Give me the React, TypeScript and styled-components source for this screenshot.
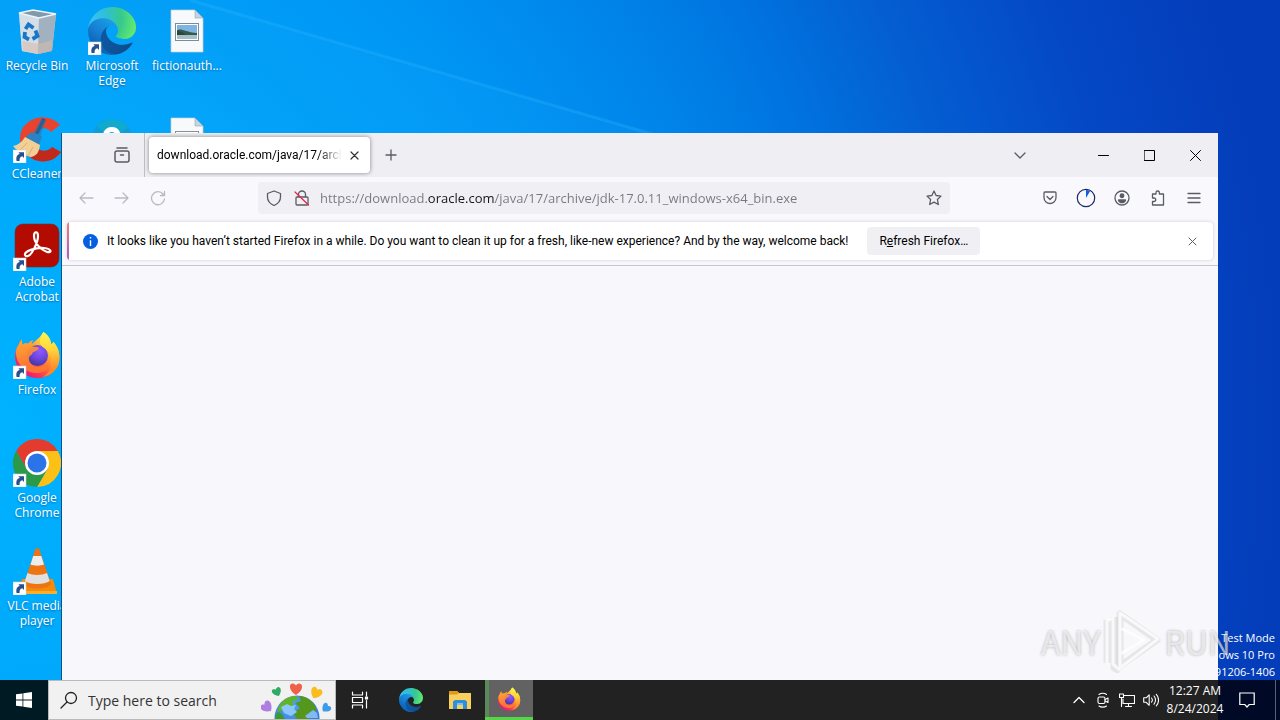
import React from "react";
import styled, { createGlobalStyle } from "styled-components";

const GlobalStyle = createGlobalStyle`
  *, *::before, *::after { box-sizing: border-box; }
  body { margin: 0; font-family: "Open Sans", "Noto Sans", sans-serif; font-size: 12px; }
  button, input { font: inherit; color: inherit; border: 0; padding: 0; background: none; }
  svg { display: block; flex: none; }
`;

/* ---------- Desktop ---------- */

const Screen = styled.div`
  display: flex;
  flex-direction: column;
  min-height: 100vh;
  overflow: hidden;
`;

const Desktop = styled.main`
  position: relative;
  flex: 1;
  min-height: 680px;
  overflow: hidden;
  background: radial-gradient(ellipse 100% 190% at 0% 62%, #00b2ff 0%, #00a8fb 22%, #0098f5 42%, #0084ea 57%, #0074e0 66%, #045ed2 76%, #0448c6 88%, #043dba 100%);
`;

const Wallpaper = styled.svg`
  position: absolute;
  inset: 0;
  width: 100%;
  height: 100%;
`;

const ShortcutColumns = styled.div`
  position: relative;
  display: flex;
`;

const ShortcutColumn = styled.div`
  display: flex;
  flex-direction: column;
  width: 75px;
`;

const Shortcut = styled.button`
  display: flex;
  flex-direction: column;
  align-items: center;
  gap: 3px;
  width: 74px;
  height: 108px;
  padding-top: 7px;
  color: #fff;
  font-size: 12px;
  line-height: 15px;
  text-align: center;
  text-shadow: 0 1px 2px rgba(0, 30, 80, 0.45);
`;

const BuildInfo = styled.p`
  position: absolute;
  right: 5px;
  bottom: 0;
  margin: 0;
  color: #fff;
  font-size: 11px;
  line-height: 17px;
  text-align: right;
  white-space: pre;
`;

/* ---------- Browser window ---------- */

const BrowserWindow = styled.section`
  position: absolute;
  inset: 133px 62px 0 61px;
  display: flex;
  flex-direction: column;
  border-left: 1px solid #12508a;
  background: #f8f8fc;
  color: #15141a;
`;

const TabStrip = styled.header`
  display: flex;
  align-items: center;
  height: 44px;
  background: #efeef3;
`;

const FirefoxView = styled.div`
  display: flex;
  justify-content: flex-end;
  align-self: stretch;
  align-items: center;
  width: 83px;
  padding-right: 4px;
  border-right: 1px solid #bdbdc4;
`;

const IconButton = styled.button<{ $width?: number; $color?: string }>`
  display: flex;
  align-items: center;
  justify-content: center;
  width: ${(p) => p.$width ?? 36}px;
  height: 32px;
  color: ${(p) => p.$color ?? "#5b5b66"};
`;

const Tab = styled.div`
  display: flex;
  align-items: center;
  width: 221px;
  height: 36px;
  margin-left: 4px;
  padding: 0 4px 0 8px;
  border-radius: 4px;
  background: #fff;
  box-shadow: 0 0 4px rgba(0, 0, 0, 0.45);
`;

const TabTitle = styled.span`
  flex: 1;
  overflow: hidden;
  font-family: Roboto, sans-serif;
  font-size: 12px;
  color: #000;
  white-space: nowrap;
  mask-image: linear-gradient(to left, transparent, #000 24px);
`;

const Spacer = styled.div<{ $width?: number }>`
  flex: ${(p) => (p.$width ? `0 0 ${p.$width}px` : "1")};
`;

const Toolbar = styled.nav`
  display: flex;
  align-items: center;
  height: 41px;
  padding: 0 6px;
  background: #f9f9fd;
`;

const AddressBar = styled.div`
  display: flex;
  flex: 1;
  align-items: center;
  height: 32px;
  padding-left: 2px;
  border-radius: 4px;
  background: #f0f0f4;
`;

/* The host name is emphasised by painting the glyphs with a stepped fill. */
const AddressInput = styled.input`
  flex: 1;
  min-width: 0;
  height: 28px;
  padding-left: 4px;
  font-size: 13px;
  outline: none;
  color: transparent;
  background: linear-gradient(to right, #77777f 112px, #15141a 112px, #15141a 179px, #77777f 179px);
  background-clip: text;
`;

const Notice = styled.div`
  display: flex;
  align-items: center;
  height: 38px;
  margin: 4px 5px 5px;
  border-radius: 4px;
  background: linear-gradient(#f08070, #a45cc8) left / 2px 100% no-repeat #fff;
  box-shadow: 0 0 3px rgba(58, 57, 68, 0.25);
  padding: 0 3px 0 16px;
  font-family: Roboto, sans-serif;
  font-size: 12px;
  color: #000;
`;

const NoticeText = styled.span`
  margin: 0 19px 0 9px;
  white-space: nowrap;
`;

const RefreshButton = styled.button`
  height: 28px;
  padding: 0 12px;
  border-radius: 4px;
  background: #f0f0f4;
  white-space: nowrap;
`;

const Page = styled.div`
  flex: 1;
  border-top: 1px solid #c6c6cb;
  background: #f8f8fc;
`;

/* ---------- Recorder watermark ---------- */

const Watermark = styled.div`
  position: absolute;
  right: 49px;
  bottom: 7px;
  display: flex;
  align-items: center;
  gap: 3px;
  color: rgba(255, 255, 255, 0.6);
  font-family: "Noto Sans CJK JP", sans-serif;
  font-size: 32px;
  line-height: 64px;
  text-shadow: 0 0 3px rgba(0, 0, 0, 0.3);
  pointer-events: none;
`;

/* ---------- Taskbar ---------- */

const Taskbar = styled.footer`
  display: flex;
  height: 40px;
  color: #fff;
  background: linear-gradient(to right, #001a24 62px, #222 62px, #222 calc(100% - 62px), #000a26 calc(100% - 62px));
`;

const TaskButton = styled.button<{ $active?: boolean }>`
  display: flex;
  align-items: center;
  justify-content: center;
  width: 48px;
  height: 40px;
  margin-right: 1px;
  background: ${(p) => (p.$active ? "linear-gradient(to right, #5a8a5a 4px, #626262 4px)" : "none")};
  border-bottom: ${(p) => (p.$active ? "3px solid #55d646" : "0")};
`;

const StartButton = styled(TaskButton)`
  margin: 0;
`;

const SearchBox = styled.label`
  display: flex;
  align-items: center;
  width: 288px;
  border: 1px solid #b9b9b9;
  background: #f1f1f1;
  color: #222;
  padding: 0 2px 0 11px;
`;

const SearchInput = styled.input`
  flex: 1;
  min-width: 0;
  margin-left: 10px;
  font-size: 14px;
  outline: none;
  &::placeholder { color: #333; opacity: 1; }
`;

const Tray = styled.div`
  display: flex;
  align-items: center;
  margin-left: auto;
`;

const TrayButton = styled.button<{ $width?: number }>`
  display: flex;
  align-items: center;
  justify-content: center;
  width: ${(p) => p.$width ?? 24}px;
  height: 40px;
`;

const Clock = styled.button`
  display: flex;
  flex-direction: column;
  align-items: center;
  width: 64px;
  font-size: 12px;
  line-height: 18px;
  white-space: nowrap;
`;

const ShowDesktop = styled.button`
  width: 5px;
  height: 40px;
  margin-left: 8px;
  border-left: 1px solid #56607a;
`;

/* ---------- Drawings ---------- */

const Arrow = () => (
  <g>
    <rect x="0" y="35" width="13" height="13" fill="#fff" stroke="#c8d4de" strokeWidth=".6" />
    <path d="M3.6 46c-.8-4 .5-6.4 3.2-6.9L5.4 37.3h5.6v5.6L9.3 41.2c-2.1.4-3 2-2.700 4.800z" fill="#27508f" />
  </g>
);

const EdgeShapes = ({ id }: { id: string }) => (
  <>
    <defs>
      <linearGradient id={id + "a"} x1="60" y1="180" x2="236" y2="190" gradientUnits="userSpaceOnUse">
        <stop stopColor="#0c59a4" /><stop offset="1" stopColor="#114a8b" />
      </linearGradient>
      <linearGradient id={id + "b"} x1="150" y1="90" x2="40" y2="230" gradientUnits="userSpaceOnUse">
        <stop stopColor="#1b9de2" /><stop offset=".5" stopColor="#1680d4" /><stop offset="1" stopColor="#0a5cae" />
      </linearGradient>
      <radialGradient id={id + "c"} cx="26" cy="60" r="235" gradientUnits="userSpaceOnUse">
        <stop stopColor="#35c1f1" /><stop offset=".3" stopColor="#2fbfd9" /><stop offset=".65" stopColor="#36c98d" /><stop offset="1" stopColor="#66eb6e" />
      </radialGradient>
    </defs>
    <path fill={`url(#${id}a)`} d="M231 190.500a93.700 93.700 0 0 1-10.500 4.700 101.900 101.900 0 0 1-35.900 6.500c-47.300 0-88.500-32.500-88.500-74.300a31.500 31.500 0 0 1 16.400-27.300c-42.800 1.800-53.800 46.400-53.800 72.500 0 73.900 68.100 81.400 82.800 81.400 7.900 0 19.800-2.300 27-4.600l1.300-.4a128.300 128.300 0 0 0 66.600-52.800 4 4 0 0 0-5.400-5.700z" />
    <path fill={`url(#${id}b)`} d="M105.700 241.400A79.200 79.200 0 0 1 83 220.100a80.700 80.700 0 0 1 29.500-120c3.200-1.500 8.500-4.100 15.600-4.100a32.400 32.400 0 0 1 25.700 13 31.900 31.900 0 0 1 6.300 18.700c0-.2 24.500-79.600-80-79.600-43.900 0-80 41.700-80 78.200a130.200 130.200 0 0 0 12.100 56 128 128 0 0 0 156.400 67.100 75.600 75.600 0 0 1-62.900-8z" />
    <path fill={`url(#${id}c)`} d="M152.300 148.900c-.8 1-3.300 2.500-3.300 5.600 0 2.600 1.700 5.100 4.700 7.200 14.400 10 41.500 8.700 41.600 8.700a59.600 59.600 0 0 0 30.300-8.300A61.400 61.400 0 0 0 256 109.200c.3-22.400-8-37.300-11.300-43.900C223.500 23.800 177.700 0 128 0A128 128 0 0 0 0 126.200c.5-36.500 36.800-66 80-66 3.500 0 23.500.3 42 10 16.300 8.600 24.900 18.900 30.900 29.200 6.200 10.700 7.300 24.200 7.300 29.500s-2.800 13.400-7.900 20z" />
  </>
);

const FirefoxShapes = ({ id }: { id: string }) => (
  <>
    <defs>
      <linearGradient id={id + "a"} x1="40" y1="8" x2="10" y2="44" gradientUnits="userSpaceOnUse">
        <stop stopColor="#fff44f" /><stop offset=".3" stopColor="#ffb52e" /><stop offset=".55" stopColor="#ff7139" /><stop offset=".8" stopColor="#f5315c" /><stop offset="1" stopColor="#e31587" />
      </linearGradient>
      <radialGradient id={id + "b"} cx="27" cy="20" r="14" gradientUnits="userSpaceOnUse">
        <stop stopColor="#9059ff" /><stop offset=".6" stopColor="#6b45dc" /><stop offset="1" stopColor="#4b3aa8" />
      </radialGradient>
      <linearGradient id={id + "c"} x1="32" y1="1" x2="38" y2="38" gradientUnits="userSpaceOnUse">
        <stop stopColor="#fff44f" /><stop offset=".5" stopColor="#ffd43a" /><stop offset="1" stopColor="#ff8a2c" />
      </linearGradient>
      <linearGradient id={id + "d"} x1="10" y1="12" x2="22" y2="32" gradientUnits="userSpaceOnUse">
        <stop stopColor="#ffa436" /><stop offset="1" stopColor="#ff7a2e" />
      </linearGradient>
    </defs>
    <path fill={`url(#${id}a)`} d="M9 8.500c-.3 2 .2 4 .8 5.200C11 12.500 13 12 15 12.500 16.500 11 18 10 20 9.300c-1 1.200-1.400 2.700-1.300 4C23 9 27 7 30.500 1c6 4.500 7 8.500 7.800 12.500l2.200-2.600c4 4.600 6.500 10 5.800 18C45 40 36 47 24.500 47 11.500 47 2 37 2 25.500c0-5.500 1.500-9 3.600-11.500.6-2.300 1.700-4 3.400-5.500z" />
    <circle cx="24.500" cy="24.500" r="10.500" fill={`url(#${id}b)`} />
    <path fill={`url(#${id}c)`} d="M30.500 1c6.300 4.300 7.300 8.500 7.800 12.500l2.200-2.600c4.500 5.500 7 12 5.300 20.100-2 8-8.300 13.500-15.800 15C37 42 39.500 35 38 28c-1-6-4-9-9-12.500C25.500 12.500 27 5.500 30.500 1z" />
    <path fill={`url(#${id}d)`} d="M9 8.500c-.3 2 .2 4 .8 5.200C11.600 12 14 12 15.600 13 17 11 18 10 20 9.300c-1.200 2-1.400 4-.6 6.200 3 .2 5.600.4 6.300 1.400.3 2-3.700 3.300-5.700 4.300-1 1.200-.7 2.300-1.400 2.600-2 .8-2.600 2.200-2.600 4 0 4.400 4 8.200 9 8.200 4 0 6-1.500 9-1.500 2 0 1.500 2 0 3.500-2.500 2.500-6 4-10.500 4C13 42 4 34 3 23c-.3-3.700.8-7 2.600-9C6.200 11.700 7.300 10 9 8.500z" opacity=".9" />
  </>
);

const RecycleBin = () => (
  <svg width="48" height="48" viewBox="0 0 48 48">
    <path d="M6 6l14-3 23 4-4 37-14 3-16-3z" fill="#b9c9d6" />
    <path d="M6 6l20 5-1 36-16-3z" fill="#d4dee6" />
    <path d="M26 11l17-4-4 37-14 3z" fill="#a2b1bf" />
    <path d="M6 6l14-3 23 4-17 4z" fill="#8199ad" stroke="#eef4f8" strokeWidth="1.300" />
    <path d="M9.500 34l16 3 14-4-.8 10.500L25 47l-15-3z" fill="#d9b9a8" opacity=".55" />
    <g fill="none" stroke="#1877c9" strokeWidth="3.800">
      <path d="M12.500 22l3-4.500 5 3.500" /><path d="M22.500 23.500l2 5.500-5 3" /><path d="M16 32.500l-4.500-2.500.5-5" />
    </g>
  </svg>
);

const EdgeIcon = () => (
  <svg width="48" height="48" viewBox="0 0 48 48"><svg width="48" height="48" viewBox="0 0 256 256"><EdgeShapes id="de" /></svg><Arrow /></svg>
);

const ImageFile = () => (
  <svg width="48" height="48" viewBox="0 0 48 48">
    <path d="M8 3h24l8 8v34H8z" fill="#f8f9fa" stroke="#c9cdd1" strokeWidth=".7" />
    <path d="M32 3l8 8h-8z" fill="#c3d5e2" stroke="#93a9b9" strokeWidth=".6" />
    <rect x="12.500" y="16.500" width="23" height="17" fill="#fff" stroke="#7a8b99" />
    <rect x="14" y="18" width="20" height="14" fill="#7fb3e2" />
    <path d="M14 23c5-2 8 2 20 3v2H14z" fill="#35594c" />
    <path d="M14 24c3 0 7 2 9 4h-9z" fill="#29483b" />
    <path d="M14 28h20v4H14z" fill="#a6bfc9" />
  </svg>
);

const TextFile = () => (
  <svg width="48" height="48" viewBox="0 0 48 48">
    <path d="M8 3h24l8 8v34H8z" fill="#f8f9fa" stroke="#c9cdd1" strokeWidth=".7" />
    <path d="M32 3l8 8h-8z" fill="#c3d5e2" stroke="#93a9b9" strokeWidth=".6" />
    <rect x="12.500" y="16.500" width="23" height="17" fill="#fff" stroke="#8a8f94" />
  </svg>
);

const CCleaner = () => (
  <svg width="48" height="48" viewBox="0 0 48 48">
    <path d="M47 10A23 22 0 0 0 11 11C8 15 7 19 7 24c0 8 4 15 11 19a22 22 0 0 0 30-6l-9-5c-4 5-11 5-15 1-5-5-4-14 1-18 5-3 10-2 13 2z" fill="#e8432f" />
    <path d="M48 37A22 22 0 0 1 18 43l5-11c4 5 12 5 16 0z" fill="#c02a1c" />
    <path d="M31 4l-9 18" stroke="#1a4470" strokeWidth="3.500" />
    <path d="M28 4l-8 15 7 3 6-17z" fill="#2f74ad" opacity=".6" />
    <path d="M17 18c4-1 9 1 12 4l-3 8-14-7z" fill="#2b83c4" />
    <path d="M12 22l15 8c-1 8-4 11-9 12-5-1-13-5-18-11 5-1 9-4 12-9z" fill="#f2cf94" />
    <path d="M14 28l-7 7m13-3l-5 9" stroke="#dcb06a" fill="none" />
    <Arrow />
  </svg>
);

const CyanApp = () => (
  <svg width="48" height="48" viewBox="0 0 48 48">
    <circle cx="24" cy="24" r="20" fill="#0c9ed9" />
    <path d="M9 11A20 20 0 0 1 40 12L24 24z" fill="#12a9cf" />
    <path d="M30 19a6.500 6.500 0 0 0-12-1c-2 6 12 6 11 13-2 6-11 5-12 0" fill="none" stroke="#fff" strokeWidth="5" />
  </svg>
);

const Acrobat = () => (
  <svg width="48" height="48" viewBox="0 0 48 48">
    <rect x="2" y="1" width="44" height="43" rx="8" fill="#b30b00" stroke="#5b3b46" strokeWidth=".6" />
    <path d="M12 32c-1-4 12-8 19-7 8 1 8 5 3 4-6-2-13-9-13-16 0-5 4-5 4 0 0 6-6 19-10 20-1.500.6-2.700 0-3-1z" fill="none" stroke="#fff" strokeWidth="2.200" />
    <Arrow />
  </svg>
);

const FirefoxIcon = () => (
  <svg width="48" height="48" viewBox="0 0 48 48"><FirefoxShapes id="df" /><Arrow /></svg>
);

const Chrome = () => (
  <svg width="48" height="48" viewBox="0 0 48 48">
    <path d="M3.200 12A24 24 0 0 1 44.800 12H24L13.600 30z" fill="#e33b2e" />
    <path d="M44.800 12A24 24 0 0 1 24 48L34.400 30 24 12z" fill="#fbc116" />
    <path d="M24 48A24 24 0 0 1 3.200 12L13.600 30h20.800z" fill="#2a9a49" />
    <circle cx="24" cy="24" r="12" fill="#fff" /><circle cx="24" cy="24" r="9.500" fill="#2b74e8" />
    <Arrow />
  </svg>
);

const Vlc = () => (
  <svg width="48" height="48" viewBox="0 0 48 48">
    <path d="M9 32h31l4 15H5z" fill="#f58a0b" />
    <path d="M5 44h39v3H5z" fill="#ffae2b" />
    <path d="M22.500 1.500h3.500L38 37c-2 6-25 6-27 0z" fill="#ee7411" />
    <path d="M20.200 9h8.100l2.700 8.500c-3 1.500-10.500 1.500-13.500 0z" fill="#ededed" />
    <path d="M14.500 26c5 2.500 14.500 2.500 19.500 0l2.700 8c-5 4-20 4-24.900 0z" fill="#e0e0e0" />
    <Arrow />
  </svg>
);

const WindowsLogo = () => (
  <svg width="16" height="16" viewBox="0 0 16 16" fill="#fff">
    <path d="M0 2.300L6.500 1.400v6.200H0zM7.300 1.300L16 0v7.600H7.300zM0 8.400h6.500v6.200L0 13.700zM7.300 8.400H16V16l-8.700-1.300z" />
  </svg>
);

const heart = "M0 6C-8 1-7-6-3-5.500-1-5 0-3.500 0-3.500S1-5.500 3.500-5.500C7-5 8 1 0 6z";
const Globe = () => (
  <svg width="72" height="38" viewBox="0 0 72 38">
    <defs>
      <radialGradient id="sea" cx=".4" cy=".2" r=".8"><stop stopColor="#4fa3f2" /><stop offset="1" stopColor="#2f6fd6" /></radialGradient>
    </defs>
    <circle cx="36" cy="37" r="22.500" fill="url(#sea)" />
    <path d="M19 23c5-6 10-8 16-8l2 4-6 1 2 4-6 2-4 3-7 2z" fill="#63b32a" />
    <path d="M38 15c8 0 14 5 17 12l-1 9-4-2-2 4H36l-4-6 7-5-5-5 6-2z" fill="#55961c" />
    <path d="M20 26l6-3 4 2 5-1-2 4 3 3-6 4-7-3z" fill="#8cc7fa" />
    <path d="M44 35l8-6 4 3 1 5H46z" fill="#7fb9f7" />
    <path d="M17 31l4 2 3 5h-10c0-3 1-5 3-7z" fill="#3e9a2a" />
    <path d={heart} fill="#f0614a" transform="translate(35 8)" />
    <path d={heart} fill="#2fa963" transform="translate(16 11) rotate(-25) scale(.75)" />
    <path d={heart} fill="#fbbc1e" transform="translate(55 12) rotate(25) scale(.95)" />
    <path d={heart} fill="#b07de0" transform="translate(6 26) rotate(-45) scale(.95)" />
    <path d={heart} fill="#3c9be8" transform="translate(65 27) rotate(45) scale(.75)" />
  </svg>
);

const Explorer = () => (
  <svg width="22" height="20" viewBox="0 0 22 20">
    <path d="M0 1h8l2 2h12v16H0z" fill="#f9cf5d" />
    <path d="M0 1h8l2 2-2 1.500H0z" fill="#e09a18" />
    <path d="M4 19v-7.500L6 10h10l2 1.500V19h-4v-4H8v4z" fill="#2f8fd8" />
    <path d="M8 13h6v2H8z" fill="#79c2f2" />
  </svg>
);

type StrokeProps = { size?: number; w?: number; box?: number; children: React.ReactNode };
const Stroke = ({ size = 16, w = 1.3, box = 16, children }: StrokeProps) => (
  <svg width={size} height={size} viewBox={`0 0 ${box} ${box}`} fill="none" stroke="currentColor" strokeWidth={w} strokeLinecap="round" strokeLinejoin="round">{children}</svg>
);

const PlayLogo = () => (
  <svg width="58" height="64" viewBox="0 0 58 64" fill="none" strokeLinejoin="round">
    <g stroke="rgba(0,0,0,.07)" strokeWidth="7">
      <path d="M17 5v52l37-26z" /><path d="M4 11v43" /><path d="M11 8v51l6 3" />
    </g>
    <g stroke="rgba(255,255,255,.75)" strokeWidth="3">
      <path d="M17 19V4l38 26-38 29V45l24-14-24-12v26" /><path d="M4 54V12l6-3v46l7 6" />
    </g>
  </svg>
);

/* ---------- Data ---------- */

const columns = [
  [
    { name: "Recycle Bin", icon: <RecycleBin /> },
    { name: "CCleaner", icon: <CCleaner /> },
    { name: "Adobe Acrobat", icon: <Acrobat /> },
    { name: "Firefox", icon: <FirefoxIcon /> },
    { name: "Google Chrome", icon: <Chrome /> },
    { name: "VLC media player", icon: <Vlc /> },
  ],
  [
    { name: "Microsoft Edge", icon: <EdgeIcon /> },
    { name: "", icon: <CyanApp /> },
  ],
  [
    { name: "fictionauth...", icon: <ImageFile /> },
    { name: "", icon: <TextFile /> },
  ],
];

export default function App() {
  return (
    <Screen>
      <GlobalStyle />
      <Desktop>
        <Wallpaper viewBox="0 0 1280 680" preserveAspectRatio="none" aria-hidden>
          <path d="M190 0L690 145H0V0z" fill="#19b4ff" opacity=".1" />
          <path d="M190 0L690 145" stroke="#38bcff" strokeWidth="3" opacity=".25" />
        </Wallpaper>
        <ShortcutColumns>
          {columns.map((items, c) => (
            <ShortcutColumn key={c}>
              {items.map((item, r) => (
                <Shortcut key={r}>{item.icon}{item.name}</Shortcut>
              ))}
            </ShortcutColumn>
          ))}
        </ShortcutColumns>
        <BuildInfo>{"Test Mode\nWindows 10 Pro\nBuild 191206-1406"}</BuildInfo>

        <BrowserWindow>
          <TabStrip>
            <FirefoxView>
              <IconButton aria-label="Firefox View">
                <Stroke w={1.5}><path d="M3 1h10" /><rect x="1" y="4" width="14" height="11" rx="2" /><path d="M6.500 8h3" /></Stroke>
              </IconButton>
            </FirefoxView>
            <Tab>
              <TabTitle>download.oracle.com/java/17/archive</TabTitle>
              <IconButton $width={24} $color="#333" aria-label="Close tab"><Stroke size={9} box={9} w={1.2}><path d="M1 1l7 7M8 1L1 8" /></Stroke></IconButton>
            </Tab>
            <IconButton $width={42} aria-label="New tab"><Stroke size={12} box={12}><path d="M6 1v10M1 6h10" /></Stroke></IconButton>
            <Spacer />
            <IconButton aria-label="List all tabs"><Stroke size={12} box={12}><path d="M1 4l5 5 5-5" /></Stroke></IconButton>
            <Spacer $width={42} />
            <IconButton $width={46} $color="#000" aria-label="Minimize"><Stroke size={11} box={11} w={1}><path d="M.5 5.500h10" /></Stroke></IconButton>
            <IconButton $width={46} $color="#000" aria-label="Maximize"><Stroke size={11} box={11} w={1}><path d="M.5.5h10v10H.5z" /></Stroke></IconButton>
            <IconButton $width={46} $color="#000" aria-label="Close"><Stroke size={11} box={11} w={1}><path d="M.5.5l10 10M10.500.5l-10 10" /></Stroke></IconButton>
          </TabStrip>

          <Toolbar>
            <IconButton $color="#b9b9c0" aria-label="Back"><Stroke><path d="M15 8H2M7 3L2 8l5 5" /></Stroke></IconButton>
            <IconButton $color="#b9b9c0" aria-label="Forward"><Stroke><path d="M1 8h13M9 3l5 5-5 5" /></Stroke></IconButton>
            <IconButton $color="#b9b9c0" aria-label="Reload"><Stroke><path d="M14.500 9A6.500 6.500 0 1 1 13 4l1.500 1.500M14.500 1.500v4h-4" /></Stroke></IconButton>
            <Spacer $width={82} />
            <AddressBar>
              <IconButton $width={28} aria-label="Tracking protection"><Stroke><path d="M8 1l6.500 2.500V7c0 4-3 7-6.500 8.500C4.500 14 1.500 11 1.500 7V3.500z" /></Stroke></IconButton>
              <IconButton $width={28} aria-label="Connection not secure"><Stroke><path d="M4.500 7V4.500a3.500 3.500 0 0 1 7 0V7M3 7h10a1 1 0 0 1 1 1v6a1 1 0 0 1-1 1H3a1 1 0 0 1-1-1V8a1 1 0 0 1 1-1z" /><path d="M1 2l13.500 13" stroke="#e22850" /></Stroke></IconButton>
              <AddressInput aria-label="Address" defaultValue="https://download.oracle.com/java/17/archive/jdk-17.0.11_windows-x64_bin.exe" />
              <IconButton $width={32} aria-label="Bookmark this page"><Stroke><path d="M8 1l2.100 4.500 4.900.6-3.600 3.400.9 5L8 12.100l-4.300 2.400.9-5L1 6.100l4.900-.6z" /></Stroke></IconButton>
            </AddressBar>
            <Spacer $width={82} />
            <IconButton aria-label="Save to Pocket"><Stroke size={14} box={14}><path d="M2 1h10a1 1 0 0 1 1 1v4.500a6 6 0 0 1-12 0V2a1 1 0 0 1 1-1zM4 5.500l3 3 3-3" /></Stroke></IconButton>
            <IconButton aria-label="Downloads"><svg width="20" height="20" viewBox="0 0 20 20"><circle cx="10" cy="10" r="8.700" fill="none" stroke="#1c2a66" strokeWidth="1.200" /><path d="M10 10V2a8 8 0 0 1 4 1.200z" fill="#0b5fe0" /></svg></IconButton>
            <IconButton aria-label="Account"><Stroke><circle cx="8" cy="8" r="7" /><circle cx="8" cy="5.800" r="1.800" fill="currentColor" /><path d="M4.500 10h7c-.6 2-2 2.700-3.500 2.700S5.100 12 4.500 10z" fill="currentColor" /></Stroke></IconButton>
            <IconButton aria-label="Extensions"><Stroke><path d="M6 4V2.700a1.700 1.700 0 0 1 3.400 0V4h4.100v11h-11v-3.500H4a1.700 1.700 0 0 0 0-3.500H2.500V4z" /></Stroke></IconButton>
            <IconButton aria-label="Menu"><Stroke size={14} box={14}><path d="M1 2.500h12M1 7h12M1 11.500h12" /></Stroke></IconButton>
          </Toolbar>

          <Notice role="status">
            <svg width="15" height="15" viewBox="0 0 15 15"><circle cx="7.500" cy="7.500" r="7.500" fill="#0560e0" /><path d="M7.500 3v1.600M7.500 6.200V12" stroke="#fff" strokeWidth="1.400" /></svg>
            <NoticeText>It looks like you haven’t started Firefox in a while. Do you want to clean it up for a fresh, like-new experience? And by the way, welcome back!</NoticeText>
            <RefreshButton>R<u>e</u>fresh Firefox…</RefreshButton>
            <Spacer />
            <IconButton aria-label="Dismiss"><Stroke size={9} box={9} w={1}><path d="M1 1l7 7M8 1L1 8" /></Stroke></IconButton>
          </Notice>
          <Page />
        </BrowserWindow>

        <Watermark><span>ANY</span><PlayLogo /><span>RUN</span></Watermark>
      </Desktop>

      <Taskbar>
        <StartButton aria-label="Start"><WindowsLogo /></StartButton>
        <SearchBox>
          <Stroke size={18} box={18}><circle cx="11" cy="7" r="5.500" /><path d="M7 11l-6 6" /></Stroke>
          <SearchInput aria-label="Search" placeholder="Type here to search" />
          <Globe />
        </SearchBox>
        <TaskButton aria-label="Task view">
          <Stroke size={18} box={18} w={1.2}><path d="M1.500 1v3h10V1M1.500 17v-3h10v3M1.500 6.500h10v5h-10zM15.500 1v4M15.500 9.500V17" /><rect x="14.500" y="6" width="2" height="2" fill="currentColor" /></Stroke>
        </TaskButton>
        <Spacer $width={2} />
        <TaskButton aria-label="Microsoft Edge"><svg width="24" height="24" viewBox="0 0 256 256"><EdgeShapes id="te" /></svg></TaskButton>
        <TaskButton aria-label="File Explorer"><Explorer /></TaskButton>
        <TaskButton $active aria-label="Firefox"><svg width="24" height="24" viewBox="0 0 48 48"><FirefoxShapes id="tf" /></svg></TaskButton>
        <Tray>
          <TrayButton aria-label="Show hidden icons"><Stroke size={12} box={12}><path d="M1 8.500l5-5 5 5" /></Stroke></TrayButton>
          <TrayButton aria-label="Meet now"><Stroke w={1.1}><rect x="3" y="5" width="7" height="6.500" rx="1.500" /><path d="M10 7.500l3-1.500v4.500L10 9M4 2.500C6 .8 9.500.8 11.500 2.500M4 14c2 1.500 5.500 1.500 7.500 0" /></Stroke></TrayButton>
          <TrayButton aria-label="Network"><Stroke w={1.1}><path d="M4.500 3.500h11v8H4V7M9.500 11.500v3M6.500 14.500h6M.5 2h4v3.500h-4zM2.500 5.500v9" /></Stroke></TrayButton>
          <TrayButton aria-label="Volume"><Stroke w={1.1}><path d="M.7 5.800h2.500l3-3v10.500l-3-3H.7zM8.500 6c1 1.200 1 3 0 4.200M11 4c2 2.200 2 6 0 8.200M13.300 2.300c3 3.200 3 8.500 0 11.500" /></Stroke></TrayButton>
          <Clock><span>12:27 AM</span><span>8/24/2024</span></Clock>
          <TrayButton $width={40} aria-label="Notifications"><Stroke w={1.2}><path d="M.8 1h14.400v11.500h-5L8 15l-2.200-2.500h-5z" strokeLinejoin="miter" /></Stroke></TrayButton>
          <ShowDesktop aria-label="Show desktop" />
        </Tray>
      </Taskbar>
    </Screen>
  );
}
